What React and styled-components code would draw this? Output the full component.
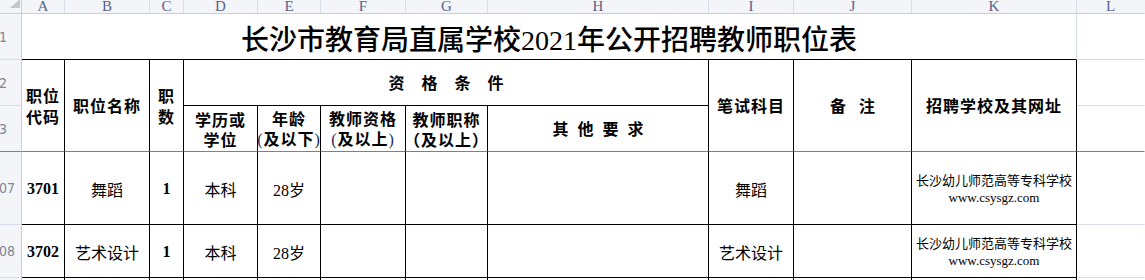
import React from 'react'
import styled, { createGlobalStyle } from 'styled-components'

const GlobalStyle = createGlobalStyle`
  html, body {
    margin: 0;
    padding: 0;
    background: #fff;
    overflow: hidden;
  }
`

const line = {
  black: '#000',
  grid: '#d6dce8',
  head: '#c5cfe0',
  green: '#38a675',
  none: 'transparent',
}

const Sheet = styled.div`
  display: grid;
  grid-template-columns: 22px 43px 85px 34px 74px 63px 85px 82px 221px 85px 118px 165px 1fr;
  grid-template-rows: 14px 46px 46px 46px 73px 53px 53px;
  width: 1145px;
  height: 280px;
  overflow: hidden;
  background: #fff;
  font-family: 'Noto Sans CJK SC', sans-serif;
  color: #000;
`

const Cell = styled.div`
  grid-column: ${(p) => p.$col};
  grid-row: ${(p) => p.$row};
  box-sizing: border-box;
  min-width: 0;
  overflow: hidden;
  border-right: 1px solid ${(p) => line[p.$r || 'black']};
  border-bottom: 1px solid ${(p) => line[p.$b || 'black']};
  display: flex;
  flex-direction: column;
  align-items: center;
  justify-content: center;
  text-align: center;
  white-space: nowrap;
`

const Corner = styled(Cell)`
  background: #f4f5f8;
  align-items: flex-end;
  justify-content: flex-start;
`

const ColHead = styled(Cell)`
  background: #f4f5f8;
  justify-content: flex-end;
  font-family: 'Liberation Serif', serif;
  font-size: 15px;
  line-height: 13px;
  color: #56628a;
`

const RowHead = styled(Cell)`
  background: #f4f5f8;
  align-items: flex-start;
`

const RowNum = styled.span`
  width: 6px;
  display: flex;
  justify-content: center;
  font-family: 'DejaVu Sans Condensed', 'DejaVu Sans', sans-serif;
  font-size: 14px;
  color: #7d8596;
`

const Title = styled(Cell)`
  font-family: 'Liberation Serif', 'Noto Sans CJK SC', serif;
  font-size: 28px;
  font-weight: 500;
  padding-top: 2px;
`

const Th = styled(Cell)`
  font-size: 16px;
  font-weight: 700;
  letter-spacing: 1px;
  line-height: ${(p) => p.$lh || 21}px;
`

const Spaced = styled.span`
  letter-spacing: ${(p) => p.$gap}px;
  padding-left: ${(p) => p.$gap}px;
`

const Paren = styled.span`
  font-family: 'Liberation Serif', serif;
  font-weight: 400;
  color: #1a2a55;
`

const Td = styled(Cell)`
  font-size: 16px;
  padding-top: 2px;
`

const Serif = styled.span`
  font-family: 'Liberation Serif', serif;
  font-size: 16px;
  font-weight: ${(p) => (p.$bold ? 700 : 400)};
`

const School = styled.div`
  font-size: 13px;
  line-height: 18px;
`

const Site = styled.div`
  font-family: 'Liberation Serif', serif;
  font-size: 13px;
  line-height: 18px;
`

const letters = ['A', 'B', 'C', 'D', 'E', 'F', 'G', 'H', 'I', 'J', 'K', 'L']

const jobs = [
  { row: 5, num: '107', code: '3701', name: '舞蹈', count: '1', edu: '本科', age: '28', exam: '舞蹈' },
  { row: 6, num: '108', code: '3702', name: '艺术设计', count: '1', edu: '本科', age: '28', exam: '艺术设计' },
]

const school = { name: '长沙幼儿师范高等专科学校', site: 'www.csysgz.com' }

const App = () => {
  return (
    <>
      <GlobalStyle />
      <Sheet>
        <Corner $col={1} $row={1} $r='head' $b='head'>
          <svg width='18' height='9' viewBox='0 0 18 9'>
            <polygon points='7,8 17,8 17,-1' fill='#c3c7ce' />
          </svg>
        </Corner>
        {letters.map((l, i) => (
          <ColHead key={l} $col={i + 2} $row={1} $r={l === 'L' ? 'none' : 'grid'} $b='head'>
            {l}
          </ColHead>
        ))}

        <RowHead $col={1} $row={2} $r='head' $b='grid'>
          <RowNum>1</RowNum>
        </RowHead>
        <Title $col='2 / 13' $row={2} $r='grid' $b='black'>
          长沙市教育局直属学校2021年公开招聘教师职位表
        </Title>
        <Cell $col={13} $row={2} $r='none' $b='grid' />

        <RowHead $col={1} $row={3} $r='head' $b='grid'>
          <RowNum>2</RowNum>
        </RowHead>
        <Th $col={2} $row='3 / 5' $b='green'>
          <div>职位</div>
          <div>代码</div>
        </Th>
        <Th $col={3} $row='3 / 5' $b='green'>
          职位名称
        </Th>
        <Th $col={4} $row='3 / 5' $b='green'>
          <div>职</div>
          <div>数</div>
        </Th>
        <Th $col='5 / 10' $row={3}>
          <Spaced $gap={17}>资格条件</Spaced>
        </Th>
        <Th $col={10} $row='3 / 5' $b='green'>
          笔试科目
        </Th>
        <Th $col={11} $row='3 / 5' $b='green'>
          <Spaced $gap={13}>备注</Spaced>
        </Th>
        <Th $col={12} $row='3 / 5' $b='green'>
          招聘学校及其网址
        </Th>
        <Cell $col={13} $row={3} $r='none' $b='grid' />

        <RowHead $col={1} $row={4} $r='head' $b='green'>
          <RowNum>3</RowNum>
        </RowHead>
        <Th $col={5} $row={4} $b='green' $lh={20}>
          <div>学历或</div>
          <div>学位</div>
        </Th>
        <Th $col={6} $row={4} $b='green' $lh={20}>
          <div>年龄</div>
          <div>
            <Paren>(</Paren>及以下<Paren>)</Paren>
          </div>
        </Th>
        <Th $col={7} $row={4} $b='green' $lh={20}>
          <div>教师资格</div>
          <div>
            <Paren>(</Paren>及以上<Paren>)</Paren>
          </div>
        </Th>
        <Th $col={8} $row={4} $b='green' $lh={20}>
          <div>教师职称</div>
          <div>（及以上）</div>
        </Th>
        <Th $col={9} $row={4} $b='green'>
          <Spaced $gap={9}>其他要求</Spaced>
        </Th>
        <Cell $col={13} $row={4} $r='none' $b='green' />

        {jobs.map((job) => (
          <React.Fragment key={job.code}>
            <RowHead $col={1} $row={job.row} $r='head' $b='grid'>
              <RowNum>{job.num}</RowNum>
            </RowHead>
            <Td $col={2} $row={job.row}>
              <Serif $bold>{job.code}</Serif>
            </Td>
            <Td $col={3} $row={job.row}>{job.name}</Td>
            <Td $col={4} $row={job.row}>
              <Serif $bold>{job.count}</Serif>
            </Td>
            <Td $col={5} $row={job.row}>{job.edu}</Td>
            <Td $col={6} $row={job.row}>
              <span>
                <Serif>{job.age}</Serif>岁
              </span>
            </Td>
            <Td $col={7} $row={job.row} />
            <Td $col={8} $row={job.row} />
            <Td $col={9} $row={job.row} />
            <Td $col={10} $row={job.row}>{job.exam}</Td>
            <Td $col={11} $row={job.row} />
            <Td $col={12} $row={job.row}>
              <School>{school.name}</School>
              <Site>{school.site}</Site>
            </Td>
            <Cell $col={13} $row={job.row} $r='none' $b='grid' />
          </React.Fragment>
        ))}

        <RowHead $col={1} $row={7} $r='head' $b='grid'>
          <RowNum>109</RowNum>
        </RowHead>
        {letters.slice(0, 11).map((l, i) => (
          <Td key={l} $col={i + 2} $row={7} $b='none' />
        ))}
        <Cell $col={13} $row={7} $r='none' $b='grid' />
      </Sheet>
    </>
  )
}

export default App
